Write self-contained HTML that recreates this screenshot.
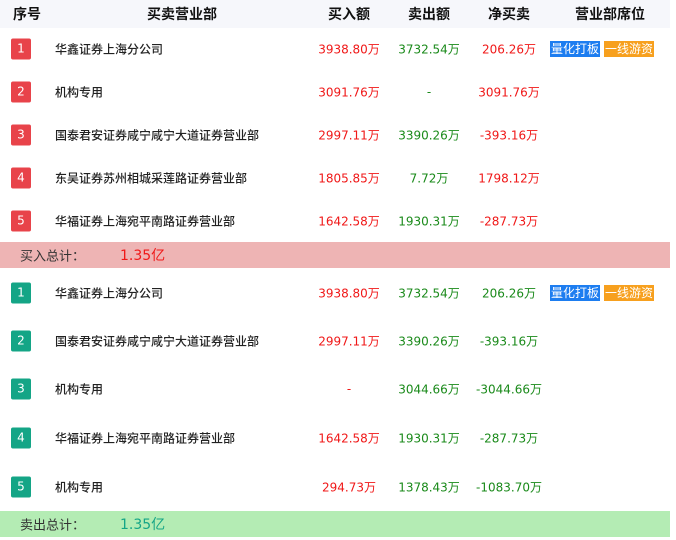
<!DOCTYPE html>
<html><head><meta charset="utf-8"><style>
*{margin:0;padding:0;box-sizing:border-box}
body{width:676px;height:540px;background:#fff;font-family:"DejaVu Sans","Noto Sans CJK SC",sans-serif;font-size:12px;position:relative;overflow:hidden}
.hd{position:absolute;left:0;top:0;width:670px;height:28px;background:#f6f7fb;font-weight:bold;font-size:14px;color:#111}
.a{position:absolute;white-space:nowrap;transform:translate(-50%,-50%)}
.row{position:absolute;left:0;width:670px}
.b{position:absolute;left:11px;width:20px;height:21px;border-radius:2px;color:#fff;font-size:12px;text-align:center;line-height:21px;transform:translateY(-50%)}
.r .b{background:#e8434a}.g .b{background:#14a586}
.n{position:absolute;left:55px;transform:translateY(-50%);color:#222;font-weight:500;font-size:12px;white-space:nowrap}
.red{color:#f01818}.grn{color:#1a8a1a}
.tag{position:absolute;width:50px;text-align:center;height:16px;line-height:16px;color:#fff;font-size:12px;transform:translateY(-50%);white-space:nowrap}
.tot{position:absolute;left:0;width:670px;height:26px;font-size:13px}
.tl{position:absolute;left:20px;top:13px;transform:translateY(-50%);color:#333;font-size:13px;white-space:nowrap}
.tv{position:absolute;left:120px;top:13px;transform:translateY(-50%);font-size:14px;white-space:nowrap}
</style></head><body>
<div class="hd">
<span class="a" style="left:27px;top:14px">序号</span>
<span class="a" style="left:182px;top:14px">买卖营业部</span>
<span class="a" style="left:349px;top:14px">买入额</span>
<span class="a" style="left:429px;top:14px">卖出额</span>
<span class="a" style="left:509px;top:14px">净买卖</span>
<span class="a" style="left:610px;top:14px">营业部席位</span>
</div>
<div class="r">
<div class="row" style="top:49px"><div class="b">1</div><div class="n">华鑫证券上海分公司</div><span class="a red" style="left:349px">3938.80万</span><span class="a grn" style="left:429px">3732.54万</span><span class="a red" style="left:509px">206.26万</span><span class="tag" style="left:550px;background:#1d7df0">量化打板</span><span class="tag" style="left:604px;background:#f7a01e">一线游资</span></div>
<div class="row" style="top:92px"><div class="b">2</div><div class="n">机构专用</div><span class="a red" style="left:349px">3091.76万</span><span class="a grn" style="left:429px">-</span><span class="a red" style="left:509px">3091.76万</span></div>
<div class="row" style="top:135px"><div class="b">3</div><div class="n">国泰君安证券咸宁咸宁大道证券营业部</div><span class="a red" style="left:349px">2997.11万</span><span class="a grn" style="left:429px">3390.26万</span><span class="a red" style="left:509px">-393.16万</span></div>
<div class="row" style="top:178px"><div class="b">4</div><div class="n">东吴证券苏州相城采莲路证券营业部</div><span class="a red" style="left:349px">1805.85万</span><span class="a grn" style="left:429px">7.72万</span><span class="a red" style="left:509px">1798.12万</span></div>
<div class="row" style="top:221px"><div class="b">5</div><div class="n">华福证券上海宛平南路证券营业部</div><span class="a red" style="left:349px">1642.58万</span><span class="a grn" style="left:429px">1930.31万</span><span class="a red" style="left:509px">-287.73万</span></div>
</div>
<div class="tot" style="top:242px;background:#eeb4b4"><span class="tl">买入总计：</span><span class="tv red">1.35亿</span></div>
<div class="g">
<div class="row" style="top:293px"><div class="b">1</div><div class="n">华鑫证券上海分公司</div><span class="a red" style="left:349px">3938.80万</span><span class="a grn" style="left:429px">3732.54万</span><span class="a grn" style="left:509px">206.26万</span><span class="tag" style="left:550px;background:#1d7df0">量化打板</span><span class="tag" style="left:604px;background:#f7a01e">一线游资</span></div>
<div class="row" style="top:341px"><div class="b">2</div><div class="n">国泰君安证券咸宁咸宁大道证券营业部</div><span class="a red" style="left:349px">2997.11万</span><span class="a grn" style="left:429px">3390.26万</span><span class="a grn" style="left:509px">-393.16万</span></div>
<div class="row" style="top:389px"><div class="b">3</div><div class="n">机构专用</div><span class="a red" style="left:349px">-</span><span class="a grn" style="left:429px">3044.66万</span><span class="a grn" style="left:509px">-3044.66万</span></div>
<div class="row" style="top:438px"><div class="b">4</div><div class="n">华福证券上海宛平南路证券营业部</div><span class="a red" style="left:349px">1642.58万</span><span class="a grn" style="left:429px">1930.31万</span><span class="a grn" style="left:509px">-287.73万</span></div>
<div class="row" style="top:487px"><div class="b">5</div><div class="n">机构专用</div><span class="a red" style="left:349px">294.73万</span><span class="a grn" style="left:429px">1378.43万</span><span class="a grn" style="left:509px">-1083.70万</span></div>
</div>
<div class="tot" style="top:511px;background:#b4ecb4"><span class="tl">卖出总计：</span><span class="tv" style="color:#14a586">1.35亿</span></div>
</body></html>
